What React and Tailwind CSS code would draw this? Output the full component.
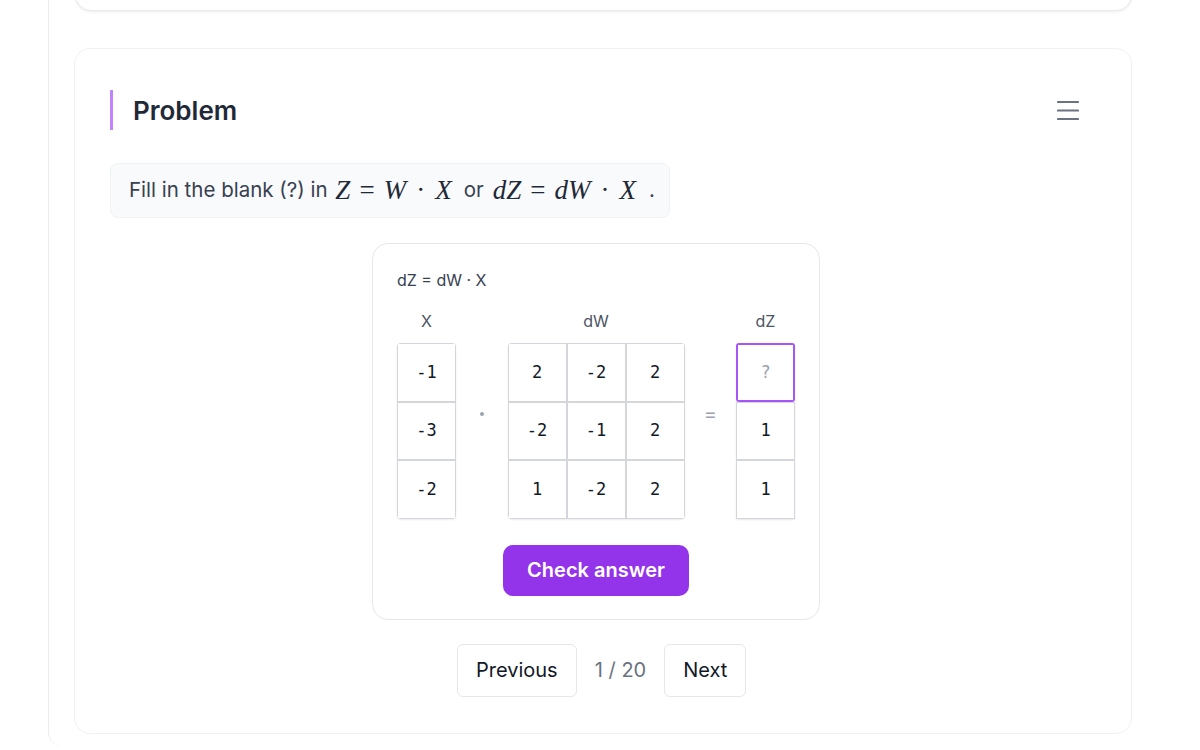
import React from 'react';

const xCol = ['-1', '-3', '-2'];
const dW = [
  ['2', '-2', '2'],
  ['-2', '-1', '2'],
  ['1', '-2', '2'],
];
const dZ = ['?', '1', '1'];

const cellFont = { fontFamily: '"DejaVu Sans Mono", "Liberation Mono", monospace' };

const Cell = ({ value, active }) => (
  <div
    className={`w-[59px] h-[58.5px] flex items-center justify-center text-[17px] bg-white ${
      active ? 'border-2 border-[#a855f7] text-[#9ca3af]' : 'border border-[#d4d6db] text-[#111827]'
    }`}
    style={cellFont}
  >
    {value}
  </div>
);

const Math = ({ children }) => (
  <span
    className="inline-flex items-baseline text-[27px] leading-none text-[#1f2937]"
    style={{ fontFamily: '"Liberation Serif", "DejaVu Serif", serif' }}
  >
    {children}
  </span>
);

const I = ({ children }) => <i>{children}</i>;
const Op = ({ children, space = 'mx-[9px]' }) => <span className={space}>{children}</span>;

export default function App() {
  return (
    <div className="w-[1200px] h-[750px] overflow-hidden bg-white" style={{ fontFamily: 'Inter, "Noto Sans", sans-serif' }}>
      <div className="ml-[48px] h-[746px] flex flex-col border-l border-[#ececec] rounded-bl-[14px] pl-[26px] pr-[68px]">
        {/* previous card (cut off) */}
        <div className="-mt-[40px] h-[51px] shrink-0 rounded-2xl border border-[#ebebeb] shadow-[0_1px_3px_rgba(0,0,0,0.08)] bg-white" />

        {/* Problem card */}
        <div className="mt-[37px] h-[686px] shrink-0 -ml-px rounded-2xl border border-[#f1f1f3] bg-white pt-[41px] pl-[35px] pr-[52px]">
          <div className="flex items-center justify-between">
            <div className="border-l-[3px] border-[#c084fc] h-[40px] pl-[20px] flex items-center">
              <h2 className="text-[26px] font-semibold text-[#1f2937]">Problem</h2>
            </div>
            <svg width="22" height="22" viewBox="0 0 22 22" className="text-[#6b7280]">
              <path d="M1 3h20M1 11.5h20M1 20h20" stroke="currentColor" strokeWidth="2.2" strokeLinecap="round" />
            </svg>
          </div>

          <div className="mt-[33px] flex items-center h-[55px] w-[560px] px-[18px] rounded-lg bg-[#f9fafb] border border-[#f1f2f4] text-[20.5px] text-[#374151]">
            <span className="whitespace-pre mr-[2px]">Fill in the blank (?) in </span>
            <Math>
              <I>Z</I>
              <Op>=</Op>
              <I>W</I>
              <Op space="mx-[10px]">·</Op>
              <I>X</I>
            </Math>
            <span className="whitespace-pre ml-[12px] mr-[9px]">or</span>
            <Math>
              <I>dZ</I>
              <Op>=</Op>
              <I>dW</I>
              <Op space="mx-[10px]">·</Op>
              <I>X</I>
            </Math>
            <span className="ml-[13px]">.</span>
          </div>

          <div className="mt-[25px] ml-[262px] w-[448px] rounded-2xl border border-[#e5e7eb] bg-white px-[24px] pt-[24px] pb-[23px]">
            <div className="text-[16px] leading-6 text-[#374151]">dZ = dW · X</div>

            <div className="mt-[17px] flex">
              <div className="flex flex-col items-center">
                <div className="h-6 leading-6 text-[16px] text-[#4b5563] mb-[10px]">X</div>
                <div className="rounded-[4px] overflow-hidden shadow-[0_1px_2px_rgba(0,0,0,0.08)]">
                  {xCol.map((v, i) => (
                    <Cell key={i} value={v} />
                  ))}
                </div>
              </div>

              <div className="w-[52px] flex items-center justify-center">
                <span className="w-[4px] h-[4px] rounded-full bg-[#9ca3af]" />
              </div>

              <div className="flex flex-col items-center">
                <div className="h-6 leading-6 text-[16px] text-[#4b5563] mb-[10px]">dW</div>
                <div className="rounded-[4px] overflow-hidden shadow-[0_1px_2px_rgba(0,0,0,0.08)]">
                  {dW.map((row, r) => (
                    <div key={r} className="flex">
                      {row.map((v, c) => (
                        <Cell key={c} value={v} />
                      ))}
                    </div>
                  ))}
                </div>
              </div>

              <div className="w-[52px] flex items-center justify-center text-[20px] text-[#9ca3af]">=</div>

              <div className="flex flex-col items-center">
                <div className="h-6 leading-6 text-[16px] text-[#4b5563] mb-[10px]">dZ</div>
                <div className="flex flex-col">
                  {dZ.map((v, i) => (
                    <div key={i} className={`rounded-[3px] shadow-[0_1px_2px_rgba(0,0,0,0.1)] ${i === 0 ? 'overflow-hidden' : ''}`}>
                      <Cell value={v} active={i === 0} />
                    </div>
                  ))}
                </div>
              </div>
            </div>

            <div className="mt-[26px] flex justify-center">
              <button className="w-[186px] h-[51px] rounded-[10px] bg-[#9333ea] text-white text-[20px] font-semibold">
                Check answer
              </button>
            </div>
          </div>

          <div className="mt-[24px] flex items-center justify-center gap-[18px] pl-[14px]">
            <button className="w-[120px] h-[53px] rounded-md border border-[#e5e7eb] bg-white text-[20px] text-[#111827]">
              Previous
            </button>
            <span className="text-[20px] text-[#6b7280]">1 / 20</span>
            <button className="w-[82px] h-[53px] rounded-md border border-[#e5e7eb] bg-white text-[20px] text-[#111827]">
              Next
            </button>
          </div>
        </div>
      </div>
    </div>
  );
}
